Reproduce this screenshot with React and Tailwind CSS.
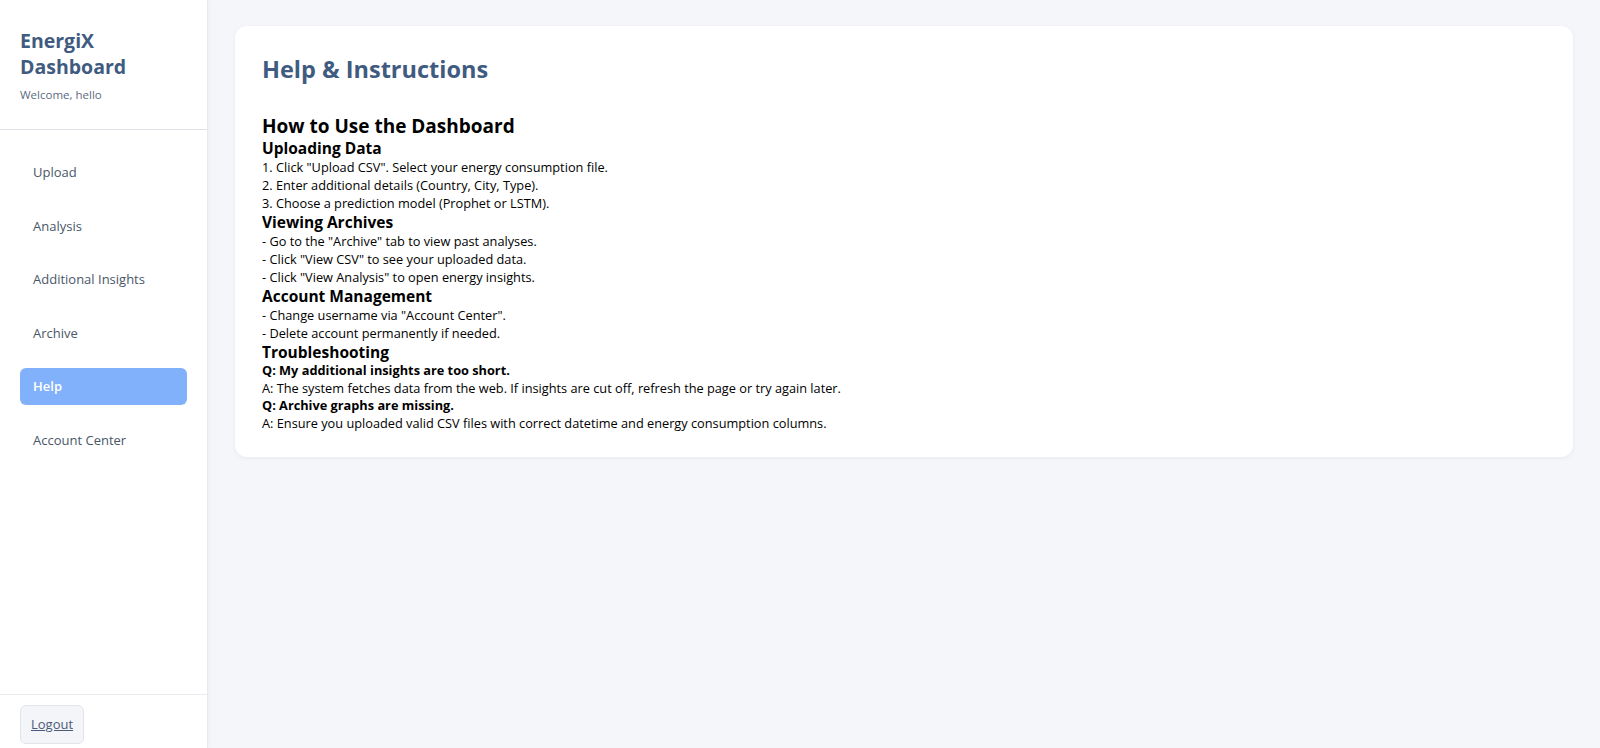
const navItems = ['Upload', 'Analysis', 'Additional Insights', 'Archive', 'Help', 'Account Center'];

const Sidebar = ({ active }) => {
  return (
    <aside className="w-[208px] shrink-0 h-screen bg-white flex flex-col border-r border-[#e6e9ee] shadow-[1px_0_4px_rgba(0,0,0,0.04)]">
      <div className="px-5 pt-[28px] pb-[26px] border-b border-[#dfe3e8]">
        <h1 className="text-[19.5px] leading-[26px] font-bold text-[#3f5b7f]">
          EnergiX
          <br />
          Dashboard
        </h1>
        <p className="mt-[6px] text-[11.5px] text-[#5b6b80]">Welcome, hello</p>
      </div>

      <nav className="flex-1 px-5 pt-[24px] flex flex-col gap-[16.5px]">
        {navItems.map((item) => (
          <button
            key={item}
            type="button"
            className={
              item === active
                ? 'h-[37px] px-[13px] text-left rounded-md bg-[#80b1fa] text-white font-semibold text-[13px]'
                : 'h-[37px] px-[13px] text-left rounded-md text-[#4a5668] text-[13px]'
            }
          >
            {item}
          </button>
        ))}
      </nav>

      <div className="border-t border-[#e9ecef] px-5 pt-[10px] pb-[4px]">
        <button
          type="button"
          className="h-[39px] px-[10px] rounded-md bg-[#f3f5f8] border border-[#e1e5ea] text-[13px] text-[#4a5a78] underline"
        >
          Logout
        </button>
      </div>
    </aside>
  );
};

const HelpCard = () => {
  return (
    <div className="bg-white rounded-xl shadow-[0_1px_4px_rgba(0,0,0,0.06)] px-[27px] pt-[26px] pb-[25px] text-black">
      <h2 className="text-[23.5px] leading-[34px] font-bold text-[#3f5b7f]">Help &amp; Instructions</h2>

      <h3 className="mt-[28px] text-[19px] leading-[24px] font-bold">How to Use the Dashboard</h3>

      <h4 className="text-[15.5px] leading-[20px] font-bold">Uploading Data</h4>
      <p className="text-[12.75px] leading-[18px]">1. Click "Upload CSV". Select your energy consumption file.</p>
      <p className="text-[12.75px] leading-[18px]">2. Enter additional details (Country, City, Type).</p>
      <p className="text-[12.75px] leading-[18px]">3. Choose a prediction model (Prophet or LSTM).</p>

      <h4 className="text-[15.5px] leading-[20px] font-bold">Viewing Archives</h4>
      <p className="text-[12.75px] leading-[18px]">- Go to the "Archive" tab to view past analyses.</p>
      <p className="text-[12.75px] leading-[18px]">- Click "View CSV" to see your uploaded data.</p>
      <p className="text-[12.75px] leading-[18px]">- Click "View Analysis" to open energy insights.</p>

      <h4 className="text-[15.5px] leading-[20px] font-bold">Account Management</h4>
      <p className="text-[12.75px] leading-[18px]">- Change username via "Account Center".</p>
      <p className="text-[12.75px] leading-[18px]">- Delete account permanently if needed.</p>

      <h4 className="text-[15.5px] leading-[20px] font-bold">Troubleshooting</h4>
      <p className="text-[12.75px] leading-[17px] font-bold">Q: My additional insights are too short.</p>
      <p className="text-[12.75px] leading-[18px]">A: The system fetches data from the web. If insights are cut off, refresh the page or try again later.</p>
      <p className="text-[12.75px] leading-[17px] font-bold">Q: Archive graphs are missing.</p>
      <p className="text-[12.75px] leading-[18px]">A: Ensure you uploaded valid CSV files with correct datetime and energy consumption columns.</p>
    </div>
  );
};

export default function App() {
  return (
    <div className="flex h-screen overflow-hidden bg-[#f4f6f9] font-['Open_Sans',sans-serif]">
      <Sidebar active="Help" />
      <main className="flex-1 px-[27px] pt-[26px]">
        <HelpCard />
      </main>
    </div>
  );
}
